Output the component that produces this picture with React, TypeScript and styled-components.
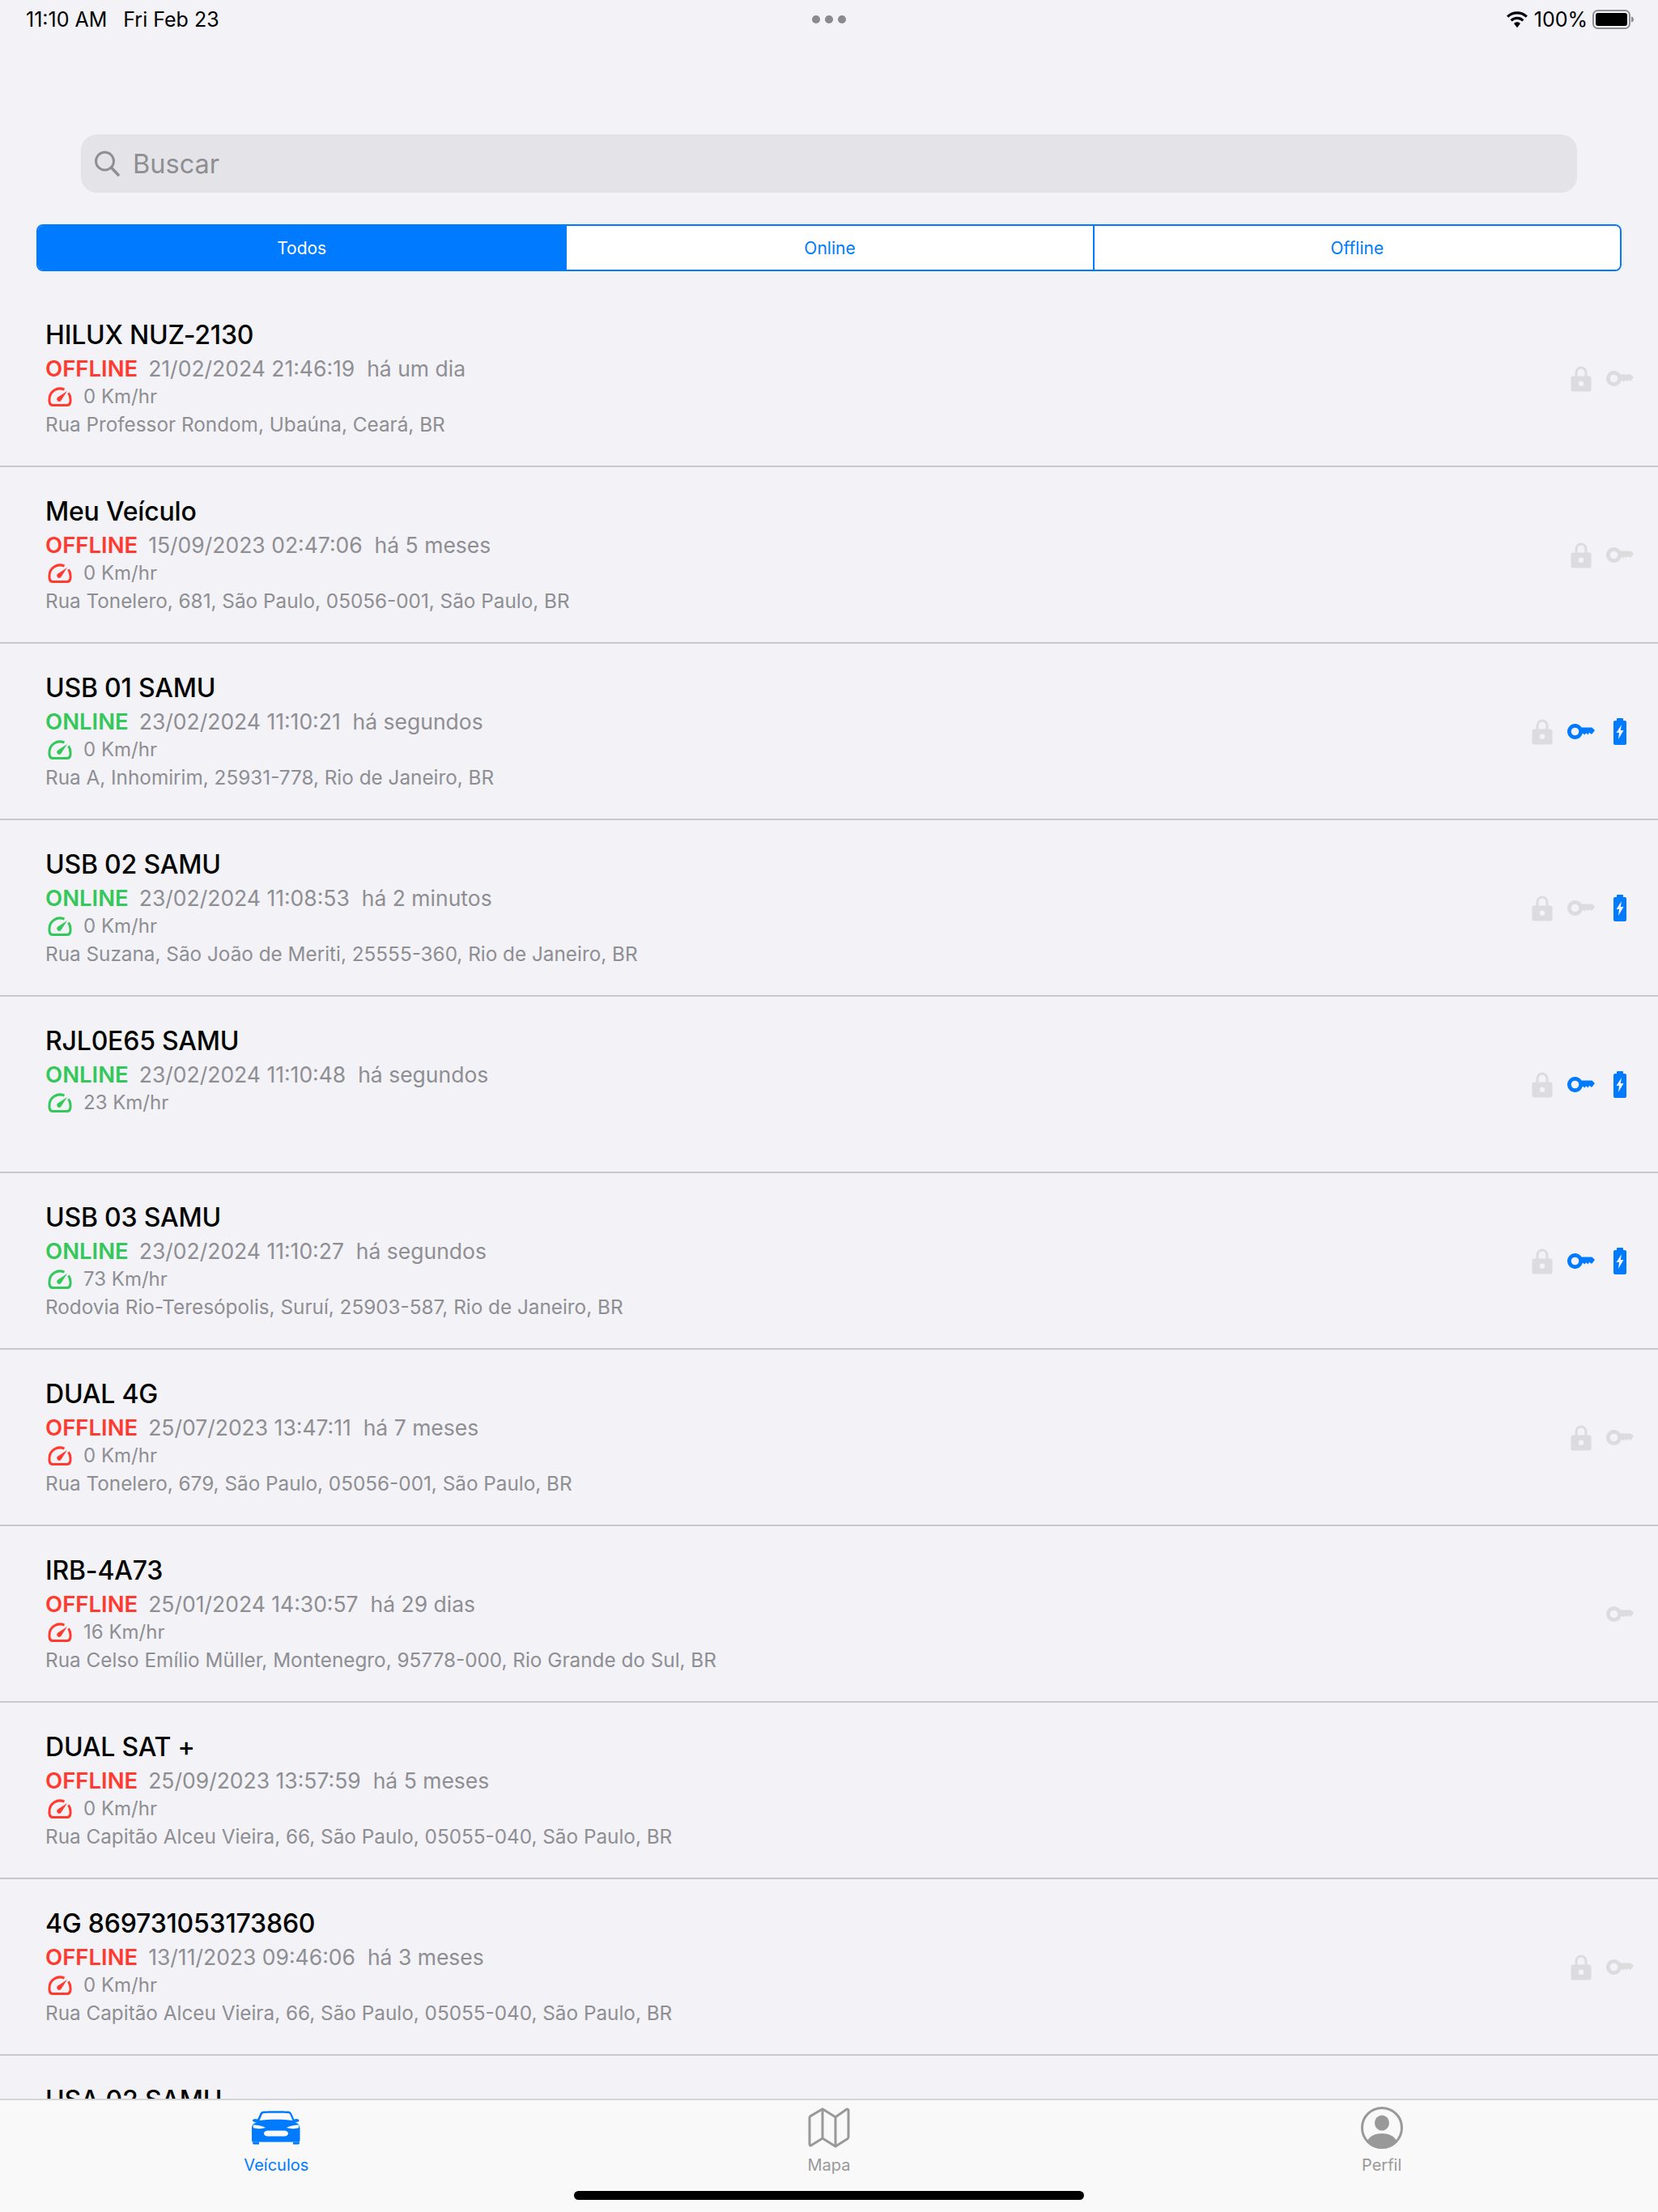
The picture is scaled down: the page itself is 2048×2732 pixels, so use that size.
import React from "react";
import styled, { createGlobalStyle } from "styled-components";

const Global = createGlobalStyle`
  html, body { margin: 0; padding: 0; background: #f2f2f7; }
  * { box-sizing: border-box; }
  body { font-family: Inter, "Liberation Sans", sans-serif; }
`;

const Page = styled.div`
  width: 2048px;
  height: 2732px;
  display: flex;
  flex-direction: column;
  overflow: hidden;
  background: #f2f2f7;
`;

const StatusBar = styled.div`
  height: 48px;
  padding: 0 32px;
  display: grid;
  grid-template-columns: 1fr auto 1fr;
  align-items: center;
  font-size: 25px;
  color: #000;
`;
const StatusLeft = styled.div`
  display: flex;
  gap: 20px;
`;
const StatusDots = styled.div`
  display: flex;
  gap: 6px;
`;
const StatusDot = styled.span`
  width: 10px;
  height: 10px;
  border-radius: 50%;
  background: #8a8a8e;
`;
const StatusRight = styled.div`
  display: flex;
  justify-content: flex-end;
  align-items: center;
  gap: 6px;
  margin-right: -3px;
`;

const SearchWrap = styled.div`
  padding: 118px 100px 0;
`;
const SearchBox = styled.div`
  height: 72px;
  border-radius: 20px;
  background: #e3e3e8;
  display: flex;
  align-items: center;
  padding-left: 16px;
  gap: 16px;
  color: #8e8e93;
  font-size: 32.5px;
`;

const Segments = styled.div`
  margin: 39px 45px 0 45px;
  height: 58px;
  display: grid;
  grid-template-columns: repeat(3, 1fr);
  border: 2px solid #007aff;
  border-radius: 8px;
  overflow: hidden;
  background: #fff;
`;
const Segment = styled.div<{ $active?: boolean }>`
  display: flex;
  align-items: center;
  justify-content: center;
  font-size: 21px;
  color: ${(p) => (p.$active ? "#fff" : "#007aff")};
  background: ${(p) => (p.$active ? "#007aff" : "#fff")};
  & + & {
    border-left: 2px solid #007aff;
  }
`;

const List = styled.div`
  flex: 1;
  min-height: 0;
  overflow: hidden;
  padding-top: 24px;
`;
const Row = styled.div`
  height: 218px;
  padding: 0 30px 0 56px;
  display: flex;
  align-items: center;
  justify-content: space-between;
  border-bottom: 2px solid #c9c9cd;
`;
const RowText = styled.div`
  display: flex;
  flex-direction: column;
  min-height: 150px;
  margin-top: -1px;
`;
const Title = styled.div`
  font-size: 32px;
  font-weight: 500;
  letter-spacing: -0.2px;
  line-height: 44px;
  color: #000;
`;
const StatusLine = styled.div`
  display: flex;
  align-items: center;
  height: 38px;
  font-size: 26.5px;
  color: #8e8e93;
  white-space: pre;
`;
const StateLabel = styled.span<{ $online: boolean }>`
  font-size: 27.5px;
  font-weight: 600;
  margin-right: 13px;
  color: ${(p) => (p.$online ? "#34c759" : "#ff3b30")};
`;
const Speed = styled.div`
  display: flex;
  align-items: center;
  gap: 14px;
  height: 32px;
  padding-left: 3px;
  font-size: 24px;
  color: #8e8e93;
`;
const Address = styled.div`
  height: 36px;
  line-height: 36px;
  font-size: 24.3px;
  color: #8e8e93;
`;
const Indicators = styled.div`
  display: flex;
  gap: 14px;
`;
const IconSlot = styled.div`
  width: 34px;
  display: flex;
  justify-content: center;
  align-items: center;
`;

const TabBar = styled.div`
  height: 140px;
  flex: none;
  position: relative;
  background: #f9f9f9;
  border-top: 2px solid #d4d4d6;
  display: grid;
  grid-template-columns: repeat(3, 1fr);
`;
const Tab = styled.div<{ $active?: boolean }>`
  display: flex;
  flex-direction: column;
  align-items: center;
  height: 92px;
  color: ${(p) => (p.$active ? "#007aff" : "#999")};
  font-size: 20px;
`;
const TabIcon = styled.div`
  height: 58px;
  margin-top: 5px;
  margin-bottom: 5px;
  display: flex;
  align-items: center;
`;
const HomeBar = styled.div`
  position: absolute;
  left: 709px;
  top: 112px;
  width: 630px;
  height: 11px;
  border-radius: 6px;
  background: #000;
`;

const Wifi = () => (
  <svg width="30" height="21" viewBox="0 0 28 20">
    <path fill="#000" d="M14 3.4c3.9 0 7.5 1.5 10.2 4l2.1-2.2A17.8 17.8 0 0 0 14 .2 17.8 17.8 0 0 0 1.7 5.2l2.1 2.2a14.8 14.8 0 0 1 10.2-4z" />
    <path fill="#000" d="M14 9.6c2.3 0 4.3.9 5.9 2.3l2.1-2.2A11.7 11.7 0 0 0 14 6.5c-3.1 0-5.900 1.200-8 3.200l2.100 2.200A8.600 8.600 0 0 1 14 9.600z" />
    <path fill="#000" d="M14 12.700c-1.500 0-2.800.600-3.800 1.500L14 19.200l3.800-5c-1-.9-2.300-1.500-3.800-1.500z" />
  </svg>
);
const Battery = () => (
  <svg width="52" height="24" viewBox="0 0 52 24">
    <rect x="1" y="1" width="45" height="22" rx="5.500" fill="none" stroke="#8e8e93" strokeWidth="2" />
    <rect x="4" y="4" width="39" height="16" rx="3" fill="#000" />
    <path d="M48 8.500c2 .400 3 1.800 3 3.500s-1 3.100-3 3.500z" fill="#8e8e93" />
  </svg>
);
const SearchIcon = () => (
  <svg width="32" height="32" viewBox="0 0 32 32" fill="none" stroke="#8e8e93" strokeWidth="3" strokeLinecap="round">
    <circle cx="13.500" cy="13" r="11" />
    <path d="M21.500 21l8.500 9" strokeWidth="3.500" />
  </svg>
);
const Gauge = ({ color }: { color: string }) => (
  <svg width="30" height="24" viewBox="0 0 30 24" fill="none">
    <path
      d="M25.500 7.300A13 13 0 0 1 28 15c0 1 .1 2.300-.1 3.500-.4 2.500-1.900 4-3.900 4H6c-2 0-3.500-1.500-3.900-4C1.900 17.300 2 16 2 15A13 13 0 0 1 20.500 3.200"
      stroke={color}
      strokeWidth="3"
    />
    <path d="M11.800 13L24 5l-8 12.200a3 3 0 0 1-4.200-4.200z" fill={color} />
  </svg>
);
const Lock = ({ color = "#dcdcdf", width = 26 }: { color?: string; width?: number }) => (
  <svg width={width} height="33" viewBox="0 0 26 33">
    <path d="M7 15V9a6 6 0 0 1 12 0v6" fill="none" stroke={color} strokeWidth="3" />
    <path fillRule="evenodd" fill={color} d="M3 13.500h20a2.500 2.500 0 0 1 2.500 2.500v14a2.500 2.500 0 0 1-2.500 2.500H3A2.500 2.500 0 0 1 .5 30V16A2.500 2.500 0 0 1 3 13.500zM13 19.500a3.200 3.200 0 1 0 0 6.400 3.200 3.200 0 0 0 0-6.400z" />
  </svg>
);
const Key = ({ color }: { color: string }) => (
  <svg width="34" height="19" viewBox="0 0 34 19">
    <path
      fillRule="evenodd"
      fill={color}
      d="M17.580 4.500H30.500L34 8l-3.500 4.500H29l-1.700-1.700-2 2.700-2-2.300-1.800 2.300-2-1.500h-.84A9.500 9.500 0 1 1 17.580 4.500zM9.500 4.700a4.800 4.800 0 1 0 0 9.600 4.800 4.800 0 0 0 0-9.600z"
    />
  </svg>
);
const BatteryCharge = () => (
  <svg width="16" height="33" viewBox="0 0 16 33">
    <path fill="#007aff" d="M5 0h6a1 1 0 0 1 1 1v2h2a2 2 0 0 1 2 2v26a2 2 0 0 1-2 2H2a2 2 0 0 1-2-2V5a2 2 0 0 1 2-2h2V1a1 1 0 0 1 1-1z" />
    <path fill="#f2f2f7" d="M10 8L3.500 18H7L6 26l6.500-11H8.800z" />
  </svg>
);
const Car = () => (
  <svg width="60" height="42" viewBox="0 0 60 42">
    <path fill="#007aff" fillRule="evenodd" d="M15 0.500C20 0 40 0 45 .500c2 .200 3 1 4 2.500l3.300 7.500 2.700-.500c2 0 3.500.800 3.500 2 0 1.300-1.500 2-3.500 2h-1.500c2.700 1.500 6 2.500 6 7.500v14.500c0 1-.3 2-1 2.500H1c-.7-.5-1-1.500-1-2.500V21.500c0-5 3.300-6 6-7.500H4.500C2.500 14 1 13.300 1 12c0-1.200 1.500-2 3.500-2l2.700.500L10.500 3c1-1.500 2-2.300 4.500-2.500zM15.200 3c-1.500.2-2 .8-2.700 2L9.500 12c6-.8 14-1.200 20.500-1.200S44.500 11.200 50.500 12l-3-7c-.7-1.200-1.200-1.800-2.700-2-5-.4-24.600-.4-29.600 0zM2 17.500c-.5.500-.5 2.500 0 3.500 4 1.500 10 1.500 15 0-3-2-10-3.500-15-3.500zm56 0c-5 0-12 1.500-15 3.500 5 1.500 11 1.500 15 0 .5-1 .5-3 0-3.500zM20 24.500c-2.500 0-5 1.500-5 3.500s2.500 3.500 5 3.500h20c2.500 0 5-1.500 5-3.500s-2.500-3.500-5-3.500z" />
    <path fill="#007aff" d="M1 38.500h8v3H2.500c-1 0-1.500-1-1.500-3zm50 0h8c0 2-.5 3-1.500 3H51z" />
  </svg>
);
const MapIcon = () => (
  <svg width="52" height="50" viewBox="0 0 52 50" fill="none" stroke="#999" strokeWidth="3" strokeLinejoin="round">
    <path d="M2 44V13c0-1 .3-1.700 1-2.400L18 1.800l16 10 14-9.800c1 0 2 .5 2 1.500V36c0 1-.3 1.700-1 2.400L34 48 18 38 3.500 47C2.500 47 2 45.500 2 44z" />
    <path d="M18 2v36M34 12v36" />
  </svg>
);
const ProfileIcon = () => (
  <svg width="54" height="52" viewBox="0 0 54 52">
    <circle cx="27" cy="26" r="24.500" fill="none" stroke="#999" strokeWidth="3" />
    <ellipse cx="27" cy="20" rx="9" ry="9.500" fill="#999" />
    <path d="M9 42c3-6 10-9 18-9s15 3 18 9c-4.500 5-11 8-18 8s-13.500-3-18-8z" fill="#999" />
  </svg>
);

type Vehicle = {
  name: string;
  online?: boolean;
  date?: string;
  ago?: string;
  speed?: string;
  address?: string;
  lock?: boolean;
  key?: "on" | "off";
  battery?: boolean;
};

const vehicles: Vehicle[] = [
  { name: "HILUX NUZ-2130", online: false, date: "21/02/2024 21:46:19", ago: "há um dia", speed: "0 Km/hr", address: "Rua Professor Rondom, Ubaúna, Ceará, BR", lock: true, key: "off" },
  { name: "Meu Veículo", online: false, date: "15/09/2023 02:47:06", ago: "há 5 meses", speed: "0 Km/hr", address: "Rua Tonelero, 681, São Paulo, 05056-001, São Paulo, BR", lock: true, key: "off" },
  { name: "USB 01 SAMU", online: true, date: "23/02/2024 11:10:21", ago: "há segundos", speed: "0 Km/hr", address: "Rua A, Inhomirim, 25931-778, Rio de Janeiro, BR", lock: true, key: "on", battery: true },
  { name: "USB 02 SAMU", online: true, date: "23/02/2024 11:08:53", ago: "há 2 minutos", speed: "0 Km/hr", address: "Rua Suzana, São João de Meriti, 25555-360, Rio de Janeiro, BR", lock: true, key: "off", battery: true },
  { name: "RJL0E65 SAMU", online: true, date: "23/02/2024 11:10:48", ago: "há segundos", speed: "23 Km/hr", lock: true, key: "on", battery: true },
  { name: "USB 03 SAMU", online: true, date: "23/02/2024 11:10:27", ago: "há segundos", speed: "73 Km/hr", address: "Rodovia Rio-Teresópolis, Suruí, 25903-587, Rio de Janeiro, BR", lock: true, key: "on", battery: true },
  { name: "DUAL 4G", online: false, date: "25/07/2023 13:47:11", ago: "há 7 meses", speed: "0 Km/hr", address: "Rua Tonelero, 679, São Paulo, 05056-001, São Paulo, BR", lock: true, key: "off" },
  { name: "IRB-4A73", online: false, date: "25/01/2024 14:30:57", ago: "há 29 dias", speed: "16 Km/hr", address: "Rua Celso Emílio Müller, Montenegro, 95778-000, Rio Grande do Sul, BR", key: "off" },
  { name: "DUAL SAT +", online: false, date: "25/09/2023 13:57:59", ago: "há 5 meses", speed: "0 Km/hr", address: "Rua Capitão Alceu Vieira, 66, São Paulo, 05055-040, São Paulo, BR" },
  { name: "4G 869731053173860", online: false, date: "13/11/2023 09:46:06", ago: "há 3 meses", speed: "0 Km/hr", address: "Rua Capitão Alceu Vieira, 66, São Paulo, 05055-040, São Paulo, BR", lock: true, key: "off" },
  { name: "USA 02 SAMU" },
];

export default function App() {
  return (
    <Page>
      <Global />
      <StatusBar>
        <StatusLeft>
          <span>11:10 AM</span>
          <span>Fri Feb 23</span>
        </StatusLeft>
        <StatusDots>
          <StatusDot />
          <StatusDot />
          <StatusDot />
        </StatusDots>
        <StatusRight>
          <Wifi />
          <span>100%</span>
          <Battery />
        </StatusRight>
      </StatusBar>
      <SearchWrap>
        <SearchBox>
          <SearchIcon />
          <span>Buscar</span>
        </SearchBox>
      </SearchWrap>
      <Segments>
        <Segment $active>Todos</Segment>
        <Segment>Online</Segment>
        <Segment>Offline</Segment>
      </Segments>
      <List>
        {vehicles.map((v) => (
          <Row key={v.name}>
            <RowText>
              <Title>{v.name}</Title>
              {v.date && (
                <>
                  <StatusLine>
                    <StateLabel $online={!!v.online}>{v.online ? "ONLINE" : "OFFLINE"}</StateLabel>
                    {v.date}
                    {"  "}
                    {v.ago}
                  </StatusLine>
                  <Speed>
                    <Gauge color={v.online ? "#34c759" : "#ff3b30"} />
                    {v.speed}
                  </Speed>
                  <Address>{v.address}</Address>
                </>
              )}
            </RowText>
            <Indicators>
              {v.lock && (
                <IconSlot>
                  <Lock />
                </IconSlot>
              )}
              {v.key && (
                <IconSlot>
                  <Key color={v.key === "on" ? "#007aff" : "#dcdcdf"} />
                </IconSlot>
              )}
              {v.battery && (
                <IconSlot>
                  <BatteryCharge />
                </IconSlot>
              )}
            </Indicators>
          </Row>
        ))}
      </List>
      <TabBar>
        <Tab $active>
          <TabIcon>
            <Car />
          </TabIcon>
          Veículos
        </Tab>
        <Tab>
          <TabIcon>
            <MapIcon />
          </TabIcon>
          Mapa
        </Tab>
        <Tab>
          <TabIcon>
            <ProfileIcon />
          </TabIcon>
          Perfil
        </Tab>
        <HomeBar />
      </TabBar>
    </Page>
  );
}
